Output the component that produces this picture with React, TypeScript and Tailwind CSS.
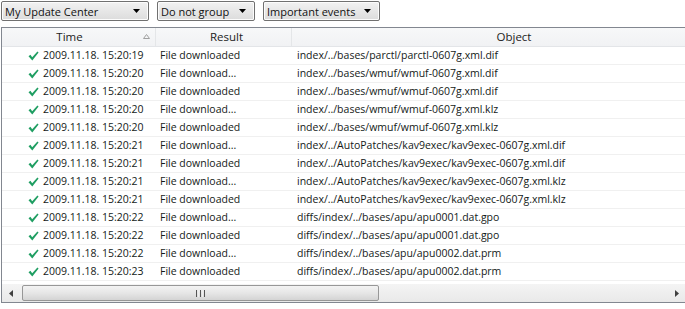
import React from "react";

const rows: [string, string, string][] = [
  ["2009.11.18. 15:20:19", "File downloaded", "index/../bases/parctl/parctl-0607g.xml.dif"],
  ["2009.11.18. 15:20:20", "File download...", "index/../bases/wmuf/wmuf-0607g.xml.dif"],
  ["2009.11.18. 15:20:20", "File downloaded", "index/../bases/wmuf/wmuf-0607g.xml.dif"],
  ["2009.11.18. 15:20:20", "File download...", "index/../bases/wmuf/wmuf-0607g.xml.klz"],
  ["2009.11.18. 15:20:20", "File downloaded", "index/../bases/wmuf/wmuf-0607g.xml.klz"],
  ["2009.11.18. 15:20:21", "File download...", "index/../AutoPatches/kav9exec/kav9exec-0607g.xml.dif"],
  ["2009.11.18. 15:20:21", "File downloaded", "index/../AutoPatches/kav9exec/kav9exec-0607g.xml.dif"],
  ["2009.11.18. 15:20:21", "File download...", "index/../AutoPatches/kav9exec/kav9exec-0607g.xml.klz"],
  ["2009.11.18. 15:20:21", "File downloaded", "index/../AutoPatches/kav9exec/kav9exec-0607g.xml.klz"],
  ["2009.11.18. 15:20:22", "File download...", "diffs/index/../bases/apu/apu0001.dat.gpo"],
  ["2009.11.18. 15:20:22", "File downloaded", "diffs/index/../bases/apu/apu0001.dat.gpo"],
  ["2009.11.18. 15:20:22", "File download...", "diffs/index/../bases/apu/apu0002.dat.prm"],
  ["2009.11.18. 15:20:23", "File downloaded", "diffs/index/../bases/apu/apu0002.dat.prm"],
];

function Dropdown({ label, width }: { label: string; width: string }) {
  return (
    <div
      className={`${width} h-[20px] flex items-center justify-between border border-[#707070] rounded-[2px] bg-gradient-to-b from-[#f2f2f2] to-[#dcdcdc] pl-[3px] pr-[8px] shadow-[inset_0_0_0_1px_#fcfcfc]`}
    >
      <span className="text-[11px] text-[#111] leading-none">{label}</span>
      <svg width="7" height="4" viewBox="0 0 7 4">
        <path d="M0 0 L7 0 L3.5 4 Z" fill="#000" />
      </svg>
    </div>
  );
}

function Check() {
  return (
    <svg width="11" height="10" viewBox="0 0 11 10" className="shrink-0">
      <path d="M0.5 5.2 L2.4 3.8 L4.2 6.2 L9.4 0.4 L10.6 1.5 L4.3 9.4 Z" fill="#1f9e62" />
    </svg>
  );
}

export default function App() {
  return (
    <div
      className="w-[685px] h-[309px] bg-white overflow-hidden relative"
      style={{ fontFamily: '"Open Sans", "Noto Sans", sans-serif' }}
    >
      <div className="flex items-start pt-[1px] pl-[1px] h-[27px]">
        <Dropdown label="My Update Center" width="w-[148px]" />
        <div className="w-[8px]" />
        <Dropdown label="Do not group" width="w-[98px]" />
        <div className="w-[8px]" />
        <Dropdown label="Important events" width="w-[117px]" />
      </div>
      <div className="ml-[1px] w-[684px] border-l border-t border-b border-[#828790] h-[276px] flex flex-col overflow-hidden">
        <div className="flex h-[19px] bg-gradient-to-b from-[#f7f8f9] to-[#f1f2f4] border-b border-[#e3e5e8] text-[11.5px] text-[#222] overflow-hidden">
          <div className="w-[154px] shrink-0 relative flex items-center justify-center border-r border-[#e4e6e8]">
            <span className="ml-[-18px]">Time</span>
            <svg width="7" height="5" viewBox="0 0 7 5" className="absolute left-[141px] top-[6px]">
              <path d="M0.5 4.5 L3.5 0.5 L6.5 4.5 Z" fill="none" stroke="#a0a0a0" strokeWidth="1" />
            </svg>
          </div>
          <div className="w-[136px] shrink-0 flex items-center justify-center border-r border-[#e4e6e8] pl-[6px]">Result</div>
          <div className="w-[444px] shrink-0 flex items-center justify-center">Object</div>
        </div>
        <div className="flex-1 flex flex-col">
          {rows.map((r, i) => (
            <div
              key={i}
              className="h-[18px] shrink-0 flex items-center border-b border-[#f0f0f0] text-[10.5px] text-[#141a18] whitespace-nowrap"
            >
              <div className="w-[155px] flex items-center pl-[26px]">
                <Check />
                <span className="ml-[4px]">{r[0]}</span>
              </div>
              <div className="w-[137px] pl-[3px]">{r[1]}</div>
              <div className="flex-1 pl-[3px]">{r[2]}</div>
            </div>
          ))}
        </div>
        <div className="h-[18px] shrink-0 flex items-center bg-gradient-to-b from-[#f4f4f4] to-[#e9e9e9]">
          <div className="w-[17px] flex items-center justify-center">
            <svg width="4" height="7" viewBox="0 0 4 7">
              <path d="M4 0 L0 3.5 L4 7 Z" fill="#404040" />
            </svg>
          </div>
          <div className="w-[357px] h-[16px] ml-[3px] rounded-[2px] border border-[#979797] bg-gradient-to-b from-[#f3f3f3] via-[#e6e6e6] to-[#d4d4d4] flex items-center justify-center">
            <div className="flex gap-[1px]">
              <div className="w-[1px] h-[7px] bg-[#555]" />
              <div className="w-[1px] h-[7px] bg-[#eee]" />
              <div className="w-[1px] h-[7px] bg-[#555]" />
              <div className="w-[1px] h-[7px] bg-[#eee]" />
              <div className="w-[1px] h-[7px] bg-[#555]" />
            </div>
          </div>
          <div className="flex-1" />
          <div className="w-[17px] flex items-center justify-center">
            <svg width="4" height="7" viewBox="0 0 4 7">
              <path d="M0 0 L4 3.5 L0 7 Z" fill="#404040" />
            </svg>
          </div>
        </div>
      </div>
    </div>
  );
}
